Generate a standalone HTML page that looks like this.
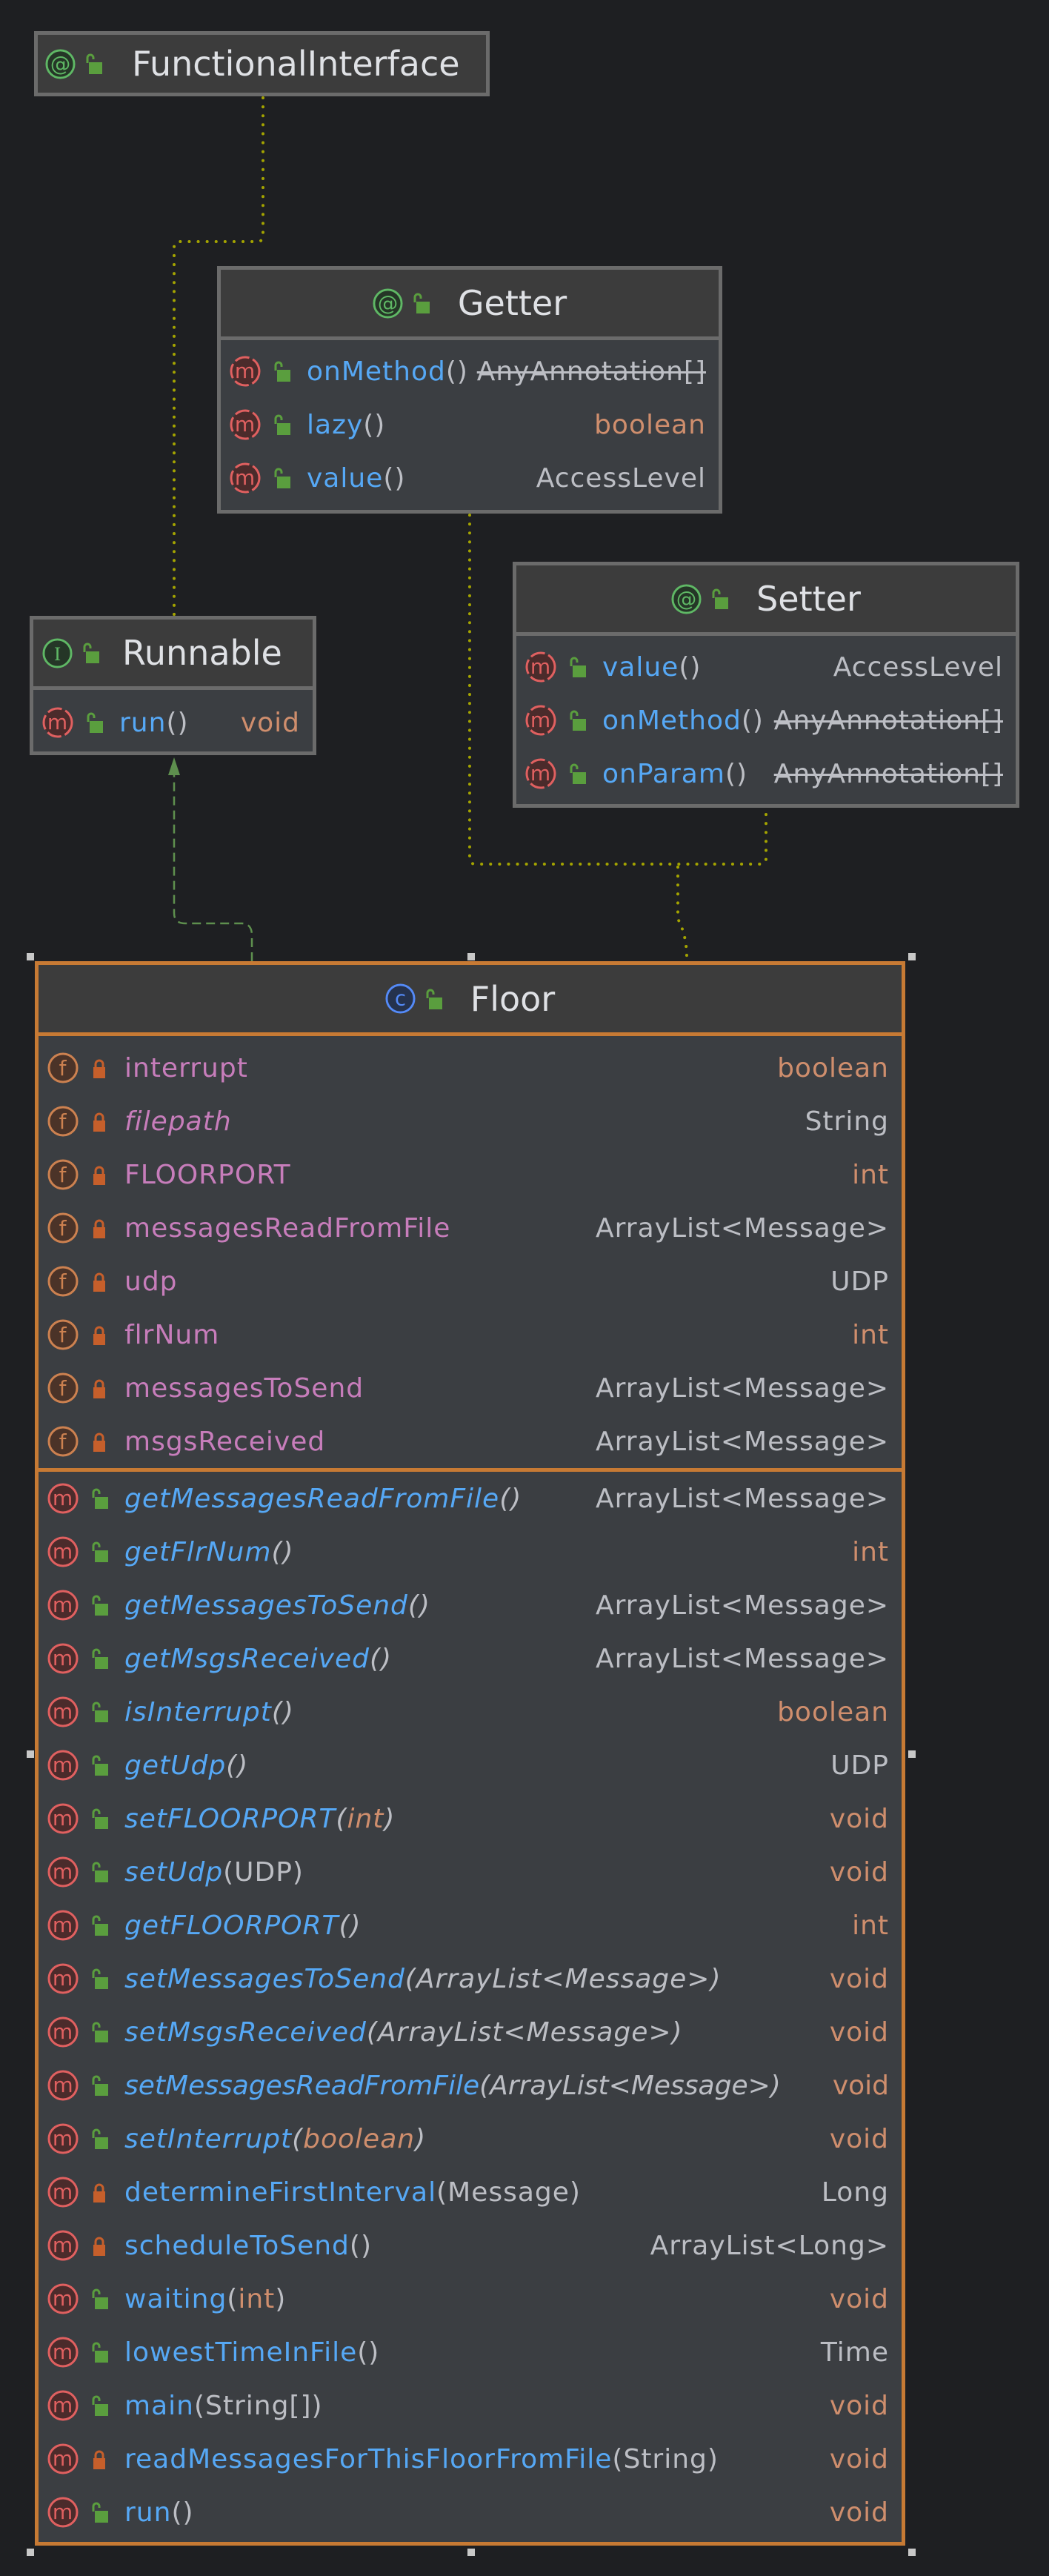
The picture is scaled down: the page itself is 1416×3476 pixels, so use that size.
<!DOCTYPE html>
<html><head><meta charset="utf-8"><style>
*{box-sizing:border-box;margin:0;padding:0}
body{width:1416px;height:3476px;background:#1e1f22;position:relative;overflow:hidden;font-family:"DejaVu Sans","Liberation Sans",sans-serif;}
.box{position:absolute;background:#3b3e42;border:5px solid #6b6b6b}
.hdr{background:#3c3c3c;border-bottom:5px solid #6b6b6b;display:flex;align-items:center;justify-content:center;font-size:46px;color:#dfe1e5;}
.hdr .ic{margin-right:13px}
.hdr .lk{margin-right:37px}
.row{height:72px;display:flex;align-items:center;padding:0 17px 0 12px;font-size:36px;letter-spacing:1px;white-space:nowrap}
.row .ic{margin-right:17px;flex:none}
.row .lk{margin-right:21px;flex:none}
.sp{flex:1}
.b{color:#56a8f5}.p{color:#c77dbb}.g{color:#bcbec4}.o{color:#cf8e6d}
.i{font-style:italic}
.s{text-decoration:line-through}
.floor{border-color:#c77a34}
.floor .hdr{border-color:#c77a34}
.sep{border-bottom:5px solid #c77a34}
.h{position:absolute;width:10px;height:10px;background:#c8c8c8}
svg.ic{display:block}
</style></head><body>

<svg width="1416" height="3476" style="position:absolute;left:0;top:0" xmlns="http://www.w3.org/2000/svg">
<g fill="none" stroke="#a3a300" stroke-width="4" stroke-linecap="round" stroke-dasharray="0.1 12">
<path d="M355 132 V318 Q355 326 347 326 H243 Q235 326 235 334 V830"/>
<path d="M634 695 V1158 Q634 1166 642 1166 H1026 Q1034 1166 1034 1158 V1096"/>
<path d="M915 1170 V1240 Q927 1262 927 1292"/>
</g>
<g fill="none" stroke="#5e8f4e" stroke-width="2.5" stroke-dasharray="12 7">
<path d="M340 1297 V1262 Q340 1246 326 1246 H250 Q235 1246 235 1232 V1044"/>
</g>
<path d="M235 1022 L227 1046 L243 1046 Z" fill="#5e8f4e"/>
</svg>

<div class="box" style="left:46px;top:42px;width:615px;height:88px;background:#3c3c3c">
  <div style="display:flex;align-items:center;height:78px;padding-left:10px;font-size:46px;color:#dfe1e5">
    <svg class="ic" width="41" height="41" viewBox="0 0 42 42"><circle cx="21" cy="21" r="19" fill="#253627" stroke="#5fb865" stroke-width="3"/><text x="21" y="30" text-anchor="middle" font-size="28" fill="#5fb865">@</text></svg>
    <svg style="margin:0 39px 0 13px" width="24" height="30" viewBox="0 0 24 30"><rect x="5" y="13" width="18" height="16" fill="#5a9e3e"/><path d="M3 14 V7 a4 4 0 0 1 8 0 V9" fill="none" stroke="#5a9e3e" stroke-width="3"/></svg>
    <span>FunctionalInterface</span>
  </div>
</div>

<div class="box" style="left:293px;top:359px;width:682px;height:334px">
  <div class="hdr" style="height:95px">
    <svg class="ic" width="41" height="41" viewBox="0 0 42 42"><circle cx="21" cy="21" r="19" fill="#253627" stroke="#5fb865" stroke-width="3"/><text x="21" y="30" text-anchor="middle" font-size="28" fill="#5fb865">@</text></svg>
    <svg class="lk" width="24" height="30" viewBox="0 0 24 30"><rect x="5" y="13" width="18" height="16" fill="#5a9e3e"/><path d="M3 14 V7 a4 4 0 0 1 8 0 V9" fill="none" stroke="#5a9e3e" stroke-width="3"/></svg>
    <span>Getter</span>
  </div>
  <div style="padding-top:6px">
    <div class="row"><svg class="ic" width="42" height="42" viewBox="0 0 42 42"><circle cx="21" cy="21" r="19" fill="#4b2b2b" stroke="#e06060" stroke-width="3" stroke-dasharray="20 5"/><text x="21" y="30" text-anchor="middle" font-size="28" fill="#e06060">m</text></svg><svg class="lk" width="24" height="30" viewBox="0 0 24 30"><rect x="5" y="13" width="18" height="16" fill="#5a9e3e"/><path d="M3 14 V7 a4 4 0 0 1 8 0 V9" fill="none" stroke="#5a9e3e" stroke-width="3"/></svg><span class="b">onMethod</span><span class="g">()</span><span class="sp"></span><span class="g s">AnyAnnotation[]</span></div>
    <div class="row"><svg class="ic" width="42" height="42" viewBox="0 0 42 42"><circle cx="21" cy="21" r="19" fill="#4b2b2b" stroke="#e06060" stroke-width="3" stroke-dasharray="20 5"/><text x="21" y="30" text-anchor="middle" font-size="28" fill="#e06060">m</text></svg><svg class="lk" width="24" height="30" viewBox="0 0 24 30"><rect x="5" y="13" width="18" height="16" fill="#5a9e3e"/><path d="M3 14 V7 a4 4 0 0 1 8 0 V9" fill="none" stroke="#5a9e3e" stroke-width="3"/></svg><span class="b">lazy</span><span class="g">()</span><span class="sp"></span><span class="o">boolean</span></div>
    <div class="row"><svg class="ic" width="42" height="42" viewBox="0 0 42 42"><circle cx="21" cy="21" r="19" fill="#4b2b2b" stroke="#e06060" stroke-width="3" stroke-dasharray="20 5"/><text x="21" y="30" text-anchor="middle" font-size="28" fill="#e06060">m</text></svg><svg class="lk" width="24" height="30" viewBox="0 0 24 30"><rect x="5" y="13" width="18" height="16" fill="#5a9e3e"/><path d="M3 14 V7 a4 4 0 0 1 8 0 V9" fill="none" stroke="#5a9e3e" stroke-width="3"/></svg><span class="b">value</span><span class="g">()</span><span class="sp"></span><span class="g">AccessLevel</span></div>
  </div>
</div>

<div class="box" style="left:40px;top:831px;width:387px;height:188px">
  <div class="hdr" style="height:95px;justify-content:flex-start;padding-left:12px">
    <svg class="ic" width="41" height="41" viewBox="0 0 42 42"><circle cx="21" cy="21" r="19" fill="#253627" stroke="#5fb865" stroke-width="3"/><text x="21" y="31" text-anchor="middle" font-size="28" fill="#5fb865" font-family="Liberation Serif">I</text></svg>
    <svg class="lk" style="margin-right:30px" width="24" height="30" viewBox="0 0 24 30"><rect x="5" y="13" width="18" height="16" fill="#5a9e3e"/><path d="M3 14 V7 a4 4 0 0 1 8 0 V9" fill="none" stroke="#5a9e3e" stroke-width="3"/></svg>
    <span>Runnable</span>
  </div>
  <div style="padding-top:8px">
    <div class="row"><svg class="ic" width="42" height="42" viewBox="0 0 42 42"><circle cx="21" cy="21" r="19" fill="#4b2b2b" stroke="#e06060" stroke-width="3" stroke-dasharray="20 5"/><text x="21" y="30" text-anchor="middle" font-size="28" fill="#e06060">m</text></svg><svg class="lk" width="24" height="30" viewBox="0 0 24 30"><rect x="5" y="13" width="18" height="16" fill="#5a9e3e"/><path d="M3 14 V7 a4 4 0 0 1 8 0 V9" fill="none" stroke="#5a9e3e" stroke-width="3"/></svg><span class="b">run</span><span class="g">()</span><span class="sp"></span><span class="o">void</span></div>
  </div>
</div>

<div class="box" style="left:692px;top:758px;width:684px;height:332px">
  <div class="hdr" style="height:95px">
    <svg class="ic" width="41" height="41" viewBox="0 0 42 42"><circle cx="21" cy="21" r="19" fill="#253627" stroke="#5fb865" stroke-width="3"/><text x="21" y="30" text-anchor="middle" font-size="28" fill="#5fb865">@</text></svg>
    <svg class="lk" width="24" height="30" viewBox="0 0 24 30"><rect x="5" y="13" width="18" height="16" fill="#5a9e3e"/><path d="M3 14 V7 a4 4 0 0 1 8 0 V9" fill="none" stroke="#5a9e3e" stroke-width="3"/></svg>
    <span>Setter</span>
  </div>
  <div style="padding-top:6px">
    <div class="row"><svg class="ic" width="42" height="42" viewBox="0 0 42 42"><circle cx="21" cy="21" r="19" fill="#4b2b2b" stroke="#e06060" stroke-width="3" stroke-dasharray="20 5"/><text x="21" y="30" text-anchor="middle" font-size="28" fill="#e06060">m</text></svg><svg class="lk" width="24" height="30" viewBox="0 0 24 30"><rect x="5" y="13" width="18" height="16" fill="#5a9e3e"/><path d="M3 14 V7 a4 4 0 0 1 8 0 V9" fill="none" stroke="#5a9e3e" stroke-width="3"/></svg><span class="b">value</span><span class="g">()</span><span class="sp"></span><span class="g">AccessLevel</span></div>
    <div class="row"><svg class="ic" width="42" height="42" viewBox="0 0 42 42"><circle cx="21" cy="21" r="19" fill="#4b2b2b" stroke="#e06060" stroke-width="3" stroke-dasharray="20 5"/><text x="21" y="30" text-anchor="middle" font-size="28" fill="#e06060">m</text></svg><svg class="lk" width="24" height="30" viewBox="0 0 24 30"><rect x="5" y="13" width="18" height="16" fill="#5a9e3e"/><path d="M3 14 V7 a4 4 0 0 1 8 0 V9" fill="none" stroke="#5a9e3e" stroke-width="3"/></svg><span class="b">onMethod</span><span class="g">()</span><span class="sp"></span><span class="g s">AnyAnnotation[]</span></div>
    <div class="row"><svg class="ic" width="42" height="42" viewBox="0 0 42 42"><circle cx="21" cy="21" r="19" fill="#4b2b2b" stroke="#e06060" stroke-width="3" stroke-dasharray="20 5"/><text x="21" y="30" text-anchor="middle" font-size="28" fill="#e06060">m</text></svg><svg class="lk" width="24" height="30" viewBox="0 0 24 30"><rect x="5" y="13" width="18" height="16" fill="#5a9e3e"/><path d="M3 14 V7 a4 4 0 0 1 8 0 V9" fill="none" stroke="#5a9e3e" stroke-width="3"/></svg><span class="b">onParam</span><span class="g">()</span><span class="sp"></span><span class="g s">AnyAnnotation[]</span></div>
  </div>
</div>

<div class="box floor" style="left:47px;top:1297px;width:1175px;height:2138px">
  <div class="hdr" style="height:96px">
    <svg class="ic" width="41" height="41" viewBox="0 0 42 42"><circle cx="21" cy="21" r="19" fill="#25324d" stroke="#548af7" stroke-width="3"/><text x="21" y="30" text-anchor="middle" font-size="28" fill="#548af7">c</text></svg>
    <svg class="lk" width="24" height="30" viewBox="0 0 24 30"><rect x="5" y="13" width="18" height="16" fill="#5a9e3e"/><path d="M3 14 V7 a4 4 0 0 1 8 0 V9" fill="none" stroke="#5a9e3e" stroke-width="3"/></svg>
    <span>Floor</span>
  </div>
  <div class="sep" style="padding-top:7px;height:588px">
    <div class="row"><svg class="ic" width="42" height="42" viewBox="0 0 42 42"><circle cx="21" cy="21" r="19" fill="#4b3328" stroke="#cc8150" stroke-width="3"/><text x="21" y="31" text-anchor="middle" font-size="28" fill="#cc8150">f</text></svg><svg class="lk" width="24" height="30" viewBox="0 0 24 30"><rect x="3" y="14" width="16" height="15" fill="#c65f2b"/><path d="M6 15 V10 a5 5 0 0 1 10 0 V15" fill="none" stroke="#c65f2b" stroke-width="3"/></svg><span class="p">interrupt</span><span class="sp"></span><span class="o">boolean</span></div>
    <div class="row"><svg class="ic" width="42" height="42" viewBox="0 0 42 42"><circle cx="21" cy="21" r="19" fill="#4b3328" stroke="#cc8150" stroke-width="3"/><text x="21" y="31" text-anchor="middle" font-size="28" fill="#cc8150">f</text></svg><svg class="lk" width="24" height="30" viewBox="0 0 24 30"><rect x="3" y="14" width="16" height="15" fill="#c65f2b"/><path d="M6 15 V10 a5 5 0 0 1 10 0 V15" fill="none" stroke="#c65f2b" stroke-width="3"/></svg><span class="p i">filepath</span><span class="sp"></span><span class="g">String</span></div>
    <div class="row"><svg class="ic" width="42" height="42" viewBox="0 0 42 42"><circle cx="21" cy="21" r="19" fill="#4b3328" stroke="#cc8150" stroke-width="3"/><text x="21" y="31" text-anchor="middle" font-size="28" fill="#cc8150">f</text></svg><svg class="lk" width="24" height="30" viewBox="0 0 24 30"><rect x="3" y="14" width="16" height="15" fill="#c65f2b"/><path d="M6 15 V10 a5 5 0 0 1 10 0 V15" fill="none" stroke="#c65f2b" stroke-width="3"/></svg><span class="p">FLOORPORT</span><span class="sp"></span><span class="o">int</span></div>
    <div class="row"><svg class="ic" width="42" height="42" viewBox="0 0 42 42"><circle cx="21" cy="21" r="19" fill="#4b3328" stroke="#cc8150" stroke-width="3"/><text x="21" y="31" text-anchor="middle" font-size="28" fill="#cc8150">f</text></svg><svg class="lk" width="24" height="30" viewBox="0 0 24 30"><rect x="3" y="14" width="16" height="15" fill="#c65f2b"/><path d="M6 15 V10 a5 5 0 0 1 10 0 V15" fill="none" stroke="#c65f2b" stroke-width="3"/></svg><span class="p">messagesReadFromFile</span><span class="sp"></span><span class="g">ArrayList&lt;Message&gt;</span></div>
    <div class="row"><svg class="ic" width="42" height="42" viewBox="0 0 42 42"><circle cx="21" cy="21" r="19" fill="#4b3328" stroke="#cc8150" stroke-width="3"/><text x="21" y="31" text-anchor="middle" font-size="28" fill="#cc8150">f</text></svg><svg class="lk" width="24" height="30" viewBox="0 0 24 30"><rect x="3" y="14" width="16" height="15" fill="#c65f2b"/><path d="M6 15 V10 a5 5 0 0 1 10 0 V15" fill="none" stroke="#c65f2b" stroke-width="3"/></svg><span class="p">udp</span><span class="sp"></span><span class="g">UDP</span></div>
    <div class="row"><svg class="ic" width="42" height="42" viewBox="0 0 42 42"><circle cx="21" cy="21" r="19" fill="#4b3328" stroke="#cc8150" stroke-width="3"/><text x="21" y="31" text-anchor="middle" font-size="28" fill="#cc8150">f</text></svg><svg class="lk" width="24" height="30" viewBox="0 0 24 30"><rect x="3" y="14" width="16" height="15" fill="#c65f2b"/><path d="M6 15 V10 a5 5 0 0 1 10 0 V15" fill="none" stroke="#c65f2b" stroke-width="3"/></svg><span class="p">flrNum</span><span class="sp"></span><span class="o">int</span></div>
    <div class="row"><svg class="ic" width="42" height="42" viewBox="0 0 42 42"><circle cx="21" cy="21" r="19" fill="#4b3328" stroke="#cc8150" stroke-width="3"/><text x="21" y="31" text-anchor="middle" font-size="28" fill="#cc8150">f</text></svg><svg class="lk" width="24" height="30" viewBox="0 0 24 30"><rect x="3" y="14" width="16" height="15" fill="#c65f2b"/><path d="M6 15 V10 a5 5 0 0 1 10 0 V15" fill="none" stroke="#c65f2b" stroke-width="3"/></svg><span class="p">messagesToSend</span><span class="sp"></span><span class="g">ArrayList&lt;Message&gt;</span></div>
    <div class="row"><svg class="ic" width="42" height="42" viewBox="0 0 42 42"><circle cx="21" cy="21" r="19" fill="#4b3328" stroke="#cc8150" stroke-width="3"/><text x="21" y="31" text-anchor="middle" font-size="28" fill="#cc8150">f</text></svg><svg class="lk" width="24" height="30" viewBox="0 0 24 30"><rect x="3" y="14" width="16" height="15" fill="#c65f2b"/><path d="M6 15 V10 a5 5 0 0 1 10 0 V15" fill="none" stroke="#c65f2b" stroke-width="3"/></svg><span class="p">msgsReceived</span><span class="sp"></span><span class="g">ArrayList&lt;Message&gt;</span></div>
  </div>
  <div>
    <div class="row"><svg class="ic" width="42" height="42" viewBox="0 0 42 42"><circle cx="21" cy="21" r="19" fill="#4b2b2b" stroke="#e06060" stroke-width="3"/><text x="21" y="30" text-anchor="middle" font-size="28" fill="#e06060">m</text></svg><svg class="lk" width="24" height="30" viewBox="0 0 24 30"><rect x="5" y="13" width="18" height="16" fill="#5a9e3e"/><path d="M3 14 V7 a4 4 0 0 1 8 0 V9" fill="none" stroke="#5a9e3e" stroke-width="3"/></svg><span class="b i">getMessagesReadFromFile</span><span class="g i">()</span><span class="sp"></span><span class="g">ArrayList&lt;Message&gt;</span></div>
    <div class="row"><svg class="ic" width="42" height="42" viewBox="0 0 42 42"><circle cx="21" cy="21" r="19" fill="#4b2b2b" stroke="#e06060" stroke-width="3"/><text x="21" y="30" text-anchor="middle" font-size="28" fill="#e06060">m</text></svg><svg class="lk" width="24" height="30" viewBox="0 0 24 30"><rect x="5" y="13" width="18" height="16" fill="#5a9e3e"/><path d="M3 14 V7 a4 4 0 0 1 8 0 V9" fill="none" stroke="#5a9e3e" stroke-width="3"/></svg><span class="b i">getFlrNum</span><span class="g i">()</span><span class="sp"></span><span class="o">int</span></div>
    <div class="row"><svg class="ic" width="42" height="42" viewBox="0 0 42 42"><circle cx="21" cy="21" r="19" fill="#4b2b2b" stroke="#e06060" stroke-width="3"/><text x="21" y="30" text-anchor="middle" font-size="28" fill="#e06060">m</text></svg><svg class="lk" width="24" height="30" viewBox="0 0 24 30"><rect x="5" y="13" width="18" height="16" fill="#5a9e3e"/><path d="M3 14 V7 a4 4 0 0 1 8 0 V9" fill="none" stroke="#5a9e3e" stroke-width="3"/></svg><span class="b i">getMessagesToSend</span><span class="g i">()</span><span class="sp"></span><span class="g">ArrayList&lt;Message&gt;</span></div>
    <div class="row"><svg class="ic" width="42" height="42" viewBox="0 0 42 42"><circle cx="21" cy="21" r="19" fill="#4b2b2b" stroke="#e06060" stroke-width="3"/><text x="21" y="30" text-anchor="middle" font-size="28" fill="#e06060">m</text></svg><svg class="lk" width="24" height="30" viewBox="0 0 24 30"><rect x="5" y="13" width="18" height="16" fill="#5a9e3e"/><path d="M3 14 V7 a4 4 0 0 1 8 0 V9" fill="none" stroke="#5a9e3e" stroke-width="3"/></svg><span class="b i">getMsgsReceived</span><span class="g i">()</span><span class="sp"></span><span class="g">ArrayList&lt;Message&gt;</span></div>
    <div class="row"><svg class="ic" width="42" height="42" viewBox="0 0 42 42"><circle cx="21" cy="21" r="19" fill="#4b2b2b" stroke="#e06060" stroke-width="3"/><text x="21" y="30" text-anchor="middle" font-size="28" fill="#e06060">m</text></svg><svg class="lk" width="24" height="30" viewBox="0 0 24 30"><rect x="5" y="13" width="18" height="16" fill="#5a9e3e"/><path d="M3 14 V7 a4 4 0 0 1 8 0 V9" fill="none" stroke="#5a9e3e" stroke-width="3"/></svg><span class="b i">isInterrupt</span><span class="g i">()</span><span class="sp"></span><span class="o">boolean</span></div>
    <div class="row"><svg class="ic" width="42" height="42" viewBox="0 0 42 42"><circle cx="21" cy="21" r="19" fill="#4b2b2b" stroke="#e06060" stroke-width="3"/><text x="21" y="30" text-anchor="middle" font-size="28" fill="#e06060">m</text></svg><svg class="lk" width="24" height="30" viewBox="0 0 24 30"><rect x="5" y="13" width="18" height="16" fill="#5a9e3e"/><path d="M3 14 V7 a4 4 0 0 1 8 0 V9" fill="none" stroke="#5a9e3e" stroke-width="3"/></svg><span class="b i">getUdp</span><span class="g i">()</span><span class="sp"></span><span class="g">UDP</span></div>
    <div class="row"><svg class="ic" width="42" height="42" viewBox="0 0 42 42"><circle cx="21" cy="21" r="19" fill="#4b2b2b" stroke="#e06060" stroke-width="3"/><text x="21" y="30" text-anchor="middle" font-size="28" fill="#e06060">m</text></svg><svg class="lk" width="24" height="30" viewBox="0 0 24 30"><rect x="5" y="13" width="18" height="16" fill="#5a9e3e"/><path d="M3 14 V7 a4 4 0 0 1 8 0 V9" fill="none" stroke="#5a9e3e" stroke-width="3"/></svg><span class="b i">setFLOORPORT</span><span class="g i">(</span><span class="o i">int</span><span class="g i">)</span><span class="sp"></span><span class="o">void</span></div>
    <div class="row"><svg class="ic" width="42" height="42" viewBox="0 0 42 42"><circle cx="21" cy="21" r="19" fill="#4b2b2b" stroke="#e06060" stroke-width="3"/><text x="21" y="30" text-anchor="middle" font-size="28" fill="#e06060">m</text></svg><svg class="lk" width="24" height="30" viewBox="0 0 24 30"><rect x="5" y="13" width="18" height="16" fill="#5a9e3e"/><path d="M3 14 V7 a4 4 0 0 1 8 0 V9" fill="none" stroke="#5a9e3e" stroke-width="3"/></svg><span class="b i">setUdp</span><span class="g">(UDP)</span><span class="sp"></span><span class="o">void</span></div>
    <div class="row"><svg class="ic" width="42" height="42" viewBox="0 0 42 42"><circle cx="21" cy="21" r="19" fill="#4b2b2b" stroke="#e06060" stroke-width="3"/><text x="21" y="30" text-anchor="middle" font-size="28" fill="#e06060">m</text></svg><svg class="lk" width="24" height="30" viewBox="0 0 24 30"><rect x="5" y="13" width="18" height="16" fill="#5a9e3e"/><path d="M3 14 V7 a4 4 0 0 1 8 0 V9" fill="none" stroke="#5a9e3e" stroke-width="3"/></svg><span class="b i">getFLOORPORT</span><span class="g i">()</span><span class="sp"></span><span class="o">int</span></div>
    <div class="row"><svg class="ic" width="42" height="42" viewBox="0 0 42 42"><circle cx="21" cy="21" r="19" fill="#4b2b2b" stroke="#e06060" stroke-width="3"/><text x="21" y="30" text-anchor="middle" font-size="28" fill="#e06060">m</text></svg><svg class="lk" width="24" height="30" viewBox="0 0 24 30"><rect x="5" y="13" width="18" height="16" fill="#5a9e3e"/><path d="M3 14 V7 a4 4 0 0 1 8 0 V9" fill="none" stroke="#5a9e3e" stroke-width="3"/></svg><span class="b i">setMessagesToSend</span><span class="g i">(ArrayList&lt;Message&gt;)</span><span class="sp"></span><span class="o">void</span></div>
    <div class="row"><svg class="ic" width="42" height="42" viewBox="0 0 42 42"><circle cx="21" cy="21" r="19" fill="#4b2b2b" stroke="#e06060" stroke-width="3"/><text x="21" y="30" text-anchor="middle" font-size="28" fill="#e06060">m</text></svg><svg class="lk" width="24" height="30" viewBox="0 0 24 30"><rect x="5" y="13" width="18" height="16" fill="#5a9e3e"/><path d="M3 14 V7 a4 4 0 0 1 8 0 V9" fill="none" stroke="#5a9e3e" stroke-width="3"/></svg><span class="b i">setMsgsReceived</span><span class="g i">(ArrayList&lt;Message&gt;)</span><span class="sp"></span><span class="o">void</span></div>
    <div class="row" style="letter-spacing:0"><svg class="ic" width="42" height="42" viewBox="0 0 42 42"><circle cx="21" cy="21" r="19" fill="#4b2b2b" stroke="#e06060" stroke-width="3"/><text x="21" y="30" text-anchor="middle" font-size="28" fill="#e06060">m</text></svg><svg class="lk" width="24" height="30" viewBox="0 0 24 30"><rect x="5" y="13" width="18" height="16" fill="#5a9e3e"/><path d="M3 14 V7 a4 4 0 0 1 8 0 V9" fill="none" stroke="#5a9e3e" stroke-width="3"/></svg><span class="b i">setMessagesReadFromFile</span><span class="g i">(ArrayList&lt;Message&gt;)</span><span class="sp"></span><span class="o">void</span></div>
    <div class="row"><svg class="ic" width="42" height="42" viewBox="0 0 42 42"><circle cx="21" cy="21" r="19" fill="#4b2b2b" stroke="#e06060" stroke-width="3"/><text x="21" y="30" text-anchor="middle" font-size="28" fill="#e06060">m</text></svg><svg class="lk" width="24" height="30" viewBox="0 0 24 30"><rect x="5" y="13" width="18" height="16" fill="#5a9e3e"/><path d="M3 14 V7 a4 4 0 0 1 8 0 V9" fill="none" stroke="#5a9e3e" stroke-width="3"/></svg><span class="b i">setInterrupt</span><span class="g i">(</span><span class="o i">boolean</span><span class="g i">)</span><span class="sp"></span><span class="o">void</span></div>
    <div class="row"><svg class="ic" width="42" height="42" viewBox="0 0 42 42"><circle cx="21" cy="21" r="19" fill="#4b2b2b" stroke="#e06060" stroke-width="3"/><text x="21" y="30" text-anchor="middle" font-size="28" fill="#e06060">m</text></svg><svg class="lk" width="24" height="30" viewBox="0 0 24 30"><rect x="3" y="14" width="16" height="15" fill="#c65f2b"/><path d="M6 15 V10 a5 5 0 0 1 10 0 V15" fill="none" stroke="#c65f2b" stroke-width="3"/></svg><span class="b">determineFirstInterval</span><span class="g">(Message)</span><span class="sp"></span><span class="g">Long</span></div>
    <div class="row"><svg class="ic" width="42" height="42" viewBox="0 0 42 42"><circle cx="21" cy="21" r="19" fill="#4b2b2b" stroke="#e06060" stroke-width="3"/><text x="21" y="30" text-anchor="middle" font-size="28" fill="#e06060">m</text></svg><svg class="lk" width="24" height="30" viewBox="0 0 24 30"><rect x="3" y="14" width="16" height="15" fill="#c65f2b"/><path d="M6 15 V10 a5 5 0 0 1 10 0 V15" fill="none" stroke="#c65f2b" stroke-width="3"/></svg><span class="b">scheduleToSend</span><span class="g">()</span><span class="sp"></span><span class="g">ArrayList&lt;Long&gt;</span></div>
    <div class="row"><svg class="ic" width="42" height="42" viewBox="0 0 42 42"><circle cx="21" cy="21" r="19" fill="#4b2b2b" stroke="#e06060" stroke-width="3"/><text x="21" y="30" text-anchor="middle" font-size="28" fill="#e06060">m</text></svg><svg class="lk" width="24" height="30" viewBox="0 0 24 30"><rect x="5" y="13" width="18" height="16" fill="#5a9e3e"/><path d="M3 14 V7 a4 4 0 0 1 8 0 V9" fill="none" stroke="#5a9e3e" stroke-width="3"/></svg><span class="b">waiting</span><span class="g">(</span><span class="o">int</span><span class="g">)</span><span class="sp"></span><span class="o">void</span></div>
    <div class="row"><svg class="ic" width="42" height="42" viewBox="0 0 42 42"><circle cx="21" cy="21" r="19" fill="#4b2b2b" stroke="#e06060" stroke-width="3"/><text x="21" y="30" text-anchor="middle" font-size="28" fill="#e06060">m</text></svg><svg class="lk" width="24" height="30" viewBox="0 0 24 30"><rect x="5" y="13" width="18" height="16" fill="#5a9e3e"/><path d="M3 14 V7 a4 4 0 0 1 8 0 V9" fill="none" stroke="#5a9e3e" stroke-width="3"/></svg><span class="b">lowestTimeInFile</span><span class="g">()</span><span class="sp"></span><span class="g">Time</span></div>
    <div class="row"><svg class="ic" width="42" height="42" viewBox="0 0 42 42"><circle cx="21" cy="21" r="19" fill="#4b2b2b" stroke="#e06060" stroke-width="3"/><text x="21" y="30" text-anchor="middle" font-size="28" fill="#e06060">m</text></svg><svg class="lk" width="24" height="30" viewBox="0 0 24 30"><rect x="5" y="13" width="18" height="16" fill="#5a9e3e"/><path d="M3 14 V7 a4 4 0 0 1 8 0 V9" fill="none" stroke="#5a9e3e" stroke-width="3"/></svg><span class="b">main</span><span class="g">(String[])</span><span class="sp"></span><span class="o">void</span></div>
    <div class="row"><svg class="ic" width="42" height="42" viewBox="0 0 42 42"><circle cx="21" cy="21" r="19" fill="#4b2b2b" stroke="#e06060" stroke-width="3"/><text x="21" y="30" text-anchor="middle" font-size="28" fill="#e06060">m</text></svg><svg class="lk" width="24" height="30" viewBox="0 0 24 30"><rect x="3" y="14" width="16" height="15" fill="#c65f2b"/><path d="M6 15 V10 a5 5 0 0 1 10 0 V15" fill="none" stroke="#c65f2b" stroke-width="3"/></svg><span class="b">readMessagesForThisFloorFromFile</span><span class="g">(String)</span><span class="sp"></span><span class="o">void</span></div>
    <div class="row"><svg class="ic" width="42" height="42" viewBox="0 0 42 42"><circle cx="21" cy="21" r="19" fill="#4b2b2b" stroke="#e06060" stroke-width="3"/><text x="21" y="30" text-anchor="middle" font-size="28" fill="#e06060">m</text></svg><svg class="lk" width="24" height="30" viewBox="0 0 24 30"><rect x="5" y="13" width="18" height="16" fill="#5a9e3e"/><path d="M3 14 V7 a4 4 0 0 1 8 0 V9" fill="none" stroke="#5a9e3e" stroke-width="3"/></svg><span class="b">run</span><span class="g">()</span><span class="sp"></span><span class="o">void</span></div>
  </div>
</div>

<div class="h" style="left:36px;top:1286px"></div>
<div class="h" style="left:631px;top:1286px"></div>
<div class="h" style="left:1226px;top:1286px"></div>
<div class="h" style="left:36px;top:2362px"></div>
<div class="h" style="left:1226px;top:2362px"></div>
<div class="h" style="left:36px;top:3439px"></div>
<div class="h" style="left:631px;top:3439px"></div>
<div class="h" style="left:1226px;top:3439px"></div>
</body></html>
